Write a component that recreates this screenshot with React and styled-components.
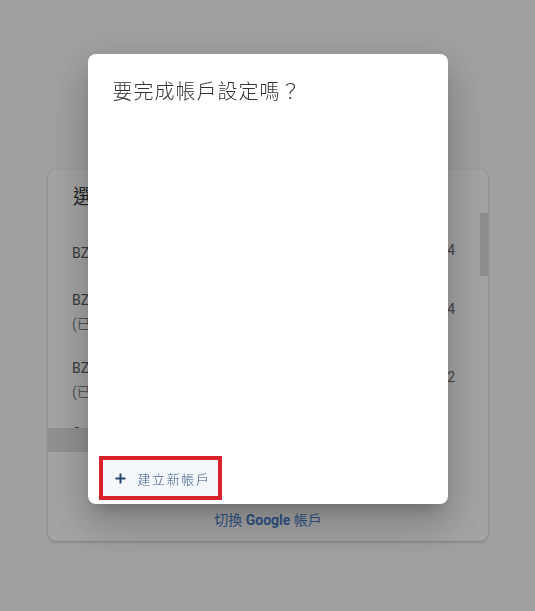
import React from "react";
import styled, { createGlobalStyle } from "styled-components";

const Global = createGlobalStyle`
  html, body { margin: 0; padding: 0; }
  body {
    background: #fafafa;
    font-family: Roboto, "Noto Sans CJK TC", "Noto Sans", sans-serif;
    width: 535px;
    height: 611px;
    overflow: hidden;
  }
`;

const Page = styled.div`
  padding: 170px 0 0 48px;
`;

const Card = styled.div`
  width: 440px;
  height: 371px;
  background: #fff;
  border-radius: 8px;
  box-shadow: 0 1px 3px rgba(0,0,0,0.25);
  display: flex;
  flex-direction: column;
  overflow: hidden;
`;

const CardHeader = styled.div`
  height: 43px;
  padding: 15px 0 0 25px;
  box-sizing: border-box;
  font-size: 20px;
  line-height: 24px;
  color: #3c4043;
`;

const List = styled.div`
  position: relative;
  height: 215px;
  overflow: hidden;
  padding: 18px 33px 0 24px;
  box-sizing: border-box;
`;

const Thumb = styled.div`
  position: absolute;
  right: 0;
  top: 0;
  width: 8px;
  height: 63px;
  background: #dcdcdc;
`;

const Row = styled.div`
  display: flex;
  justify-content: space-between;
  padding: ${(p) => (p.$double ? "13px 0 7px" : "10px 0")};
  font-size: 14px;
  line-height: 24px;
  color: #5a5e63;
`;

const Name = styled.div`
  display: flex;
  flex-direction: column;
`;

const Sub = styled.span`
  color: #80858a;
`;

const Num = styled.span`
  align-self: center;
  color: #6a6e73;
  font-size: 14px;
  margin-top: -6px;
`;

const BandRow = styled.div`
  height: 24px;
  display: flex;
`;

const Band = styled.div`
  width: 300px;
  background: #e2e2e2;
`;

const CardFooter = styled.div`
  flex: 1;
  display: flex;
  justify-content: center;
  padding-top: 58px;
  box-sizing: border-box;
`;

const SwitchLink = styled.span`
  font-size: 14px;
  font-weight: 400;
  line-height: 20px;
  color: #4a80cc;
`;

const Brand = styled.b`
  font-weight: 700;
`;

const Overlay = styled.div`
  position: fixed;
  inset: 0;
  background: rgba(0, 0, 0, 0.36);
  display: flex;
  justify-content: center;
  align-items: flex-start;
  padding-top: 54px;
`;

const Dialog = styled.div`
  width: 360px;
  height: 450px;
  background: #fff;
  border-radius: 8px;
  box-shadow: 0 11px 15px -7px rgba(0,0,0,0.2), 0 24px 38px 3px rgba(0,0,0,0.12), 0 9px 46px 8px rgba(0,0,0,0.1);
  display: flex;
  flex-direction: column;
  box-sizing: border-box;
  padding: 24px 0 4px 11px;
`;

const Title = styled.h2`
  margin: 0 0 0 14px;
  font-weight: 300;
  font-size: 20px;
  letter-spacing: 1px;
  line-height: 26px;
  color: #333;
  font-family: "Noto Sans CJK TC", Roboto, sans-serif;
`;

const Spacer = styled.div`
  flex: 1;
`;

const Highlight = styled.div`
  align-self: flex-start;
  border: 4px solid #d9222c;
  width: 123px;
  height: 44px;
  box-sizing: border-box;
`;

const CreateButton = styled.button`
  width: 100%;
  height: 100%;
  border: none;
  background: #f4f7fb;
  display: flex;
  align-items: center;
  gap: 12px;
  padding: 0 0 0 12px;
  font-family: "Noto Sans CJK TC", Roboto, sans-serif;
  font-size: 13px;
  font-weight: 300;
  letter-spacing: 1.6px;
  color: #3d5b88;
  cursor: pointer;
`;

const PlusIcon = () => (
  <svg width="11" height="11" viewBox="0 0 11 11">
    <path d="M5.5 0.5v10M0.5 5.5h10" stroke="#24446f" strokeWidth="2" fill="none" />
  </svg>
);

const accounts = [
  { name: "BZ 廣告帳戶", sub: null, num: "123-456-7894" },
  { name: "BZ 行銷帳戶", sub: "(已停用)", num: "234-567-8904" },
  { name: "BZ 測試帳戶", sub: "(已取消)", num: "345-678-9012" },
  { name: "Co 帳戶", sub: null, num: null },
];

export default function App() {
  return (
    <>
      <Global />
      <Page>
        <Card>
          <CardHeader>選擇帳戶</CardHeader>
          <List>
            <Thumb />
            {accounts.map((a) => (
              <Row key={a.name} $double={!!a.sub}>
                <Name>
                  <span>{a.name}</span>
                  {a.sub && <Sub>{a.sub}</Sub>}
                </Name>
                {a.num && <Num>{a.num}</Num>}
              </Row>
            ))}
          </List>
          <BandRow>
            <Band />
          </BandRow>
          <CardFooter>
            <SwitchLink>
              切換 <Brand>Google</Brand> 帳戶
            </SwitchLink>
          </CardFooter>
        </Card>
      </Page>
      <Overlay>
        <Dialog>
          <Title>要完成帳戶設定嗎？</Title>
          <Spacer />
          <Highlight>
            <CreateButton>
              <PlusIcon />
              建立新帳戶
            </CreateButton>
          </Highlight>
        </Dialog>
      </Overlay>
    </>
  );
}
